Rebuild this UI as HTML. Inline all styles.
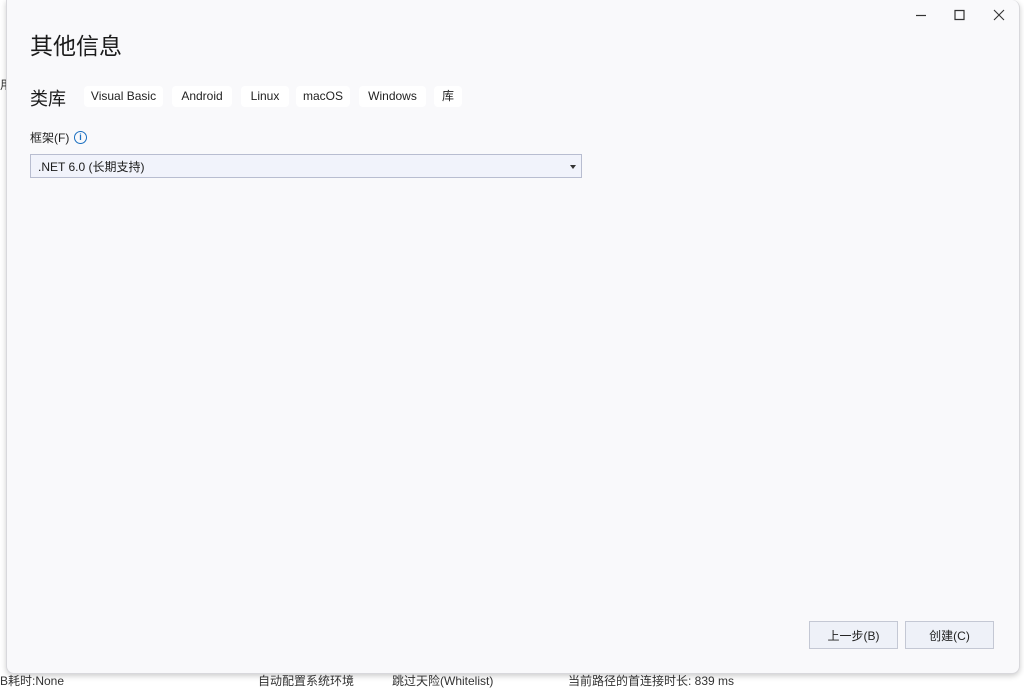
<!DOCTYPE html>
<html><head><meta charset="utf-8"><style>
body{margin:0;width:1024px;height:680px;background:#fff;position:relative;overflow:hidden;font-family:"Liberation Sans","Noto Sans CJK SC",sans-serif;}
.bgt{position:absolute;font-size:12px;color:#333;}
.dlg{position:absolute;left:6px;top:0;width:1012px;height:673px;background:#f9f9fb;border:1px solid #d8d8dc;border-top:none;border-radius:0 8px 8px 8px;box-shadow:0 2px 6px rgba(0,0,0,.2);}
.title{position:absolute;left:23px;top:27px;font-size:23px;color:#1b1b1b;}
.sub{position:absolute;left:23px;top:85px;font-size:18px;color:#1b1b1b;}
.tag{position:absolute;top:86px;height:21px;line-height:21px;background:#fff;border-radius:4px;font-size:12px;color:#222;text-align:center;}
.lab{position:absolute;left:23px;top:129px;font-size:12px;color:#222;}
.info{position:absolute;left:67px;top:131px;width:11px;height:11px;border:1.5px solid #1a6fc0;border-radius:50%;color:#1a6fc0;font-size:9px;line-height:11px;text-align:center;font-weight:bold;}
.sel{position:absolute;left:23px;top:154px;height:24px;border:1px solid #b8bdd0;background:#f1f3fb;font-size:12px;line-height:24px;padding-left:7px;box-sizing:border-box;width:552px;color:#1b1b1b;}
.sel:after{content:"";position:absolute;right:5px;top:10px;border:3px solid transparent;border-top:4px solid #333;}
.btn{position:absolute;top:621px;height:28px;border:1px solid #c4c8d4;background:#eef1f8;font-size:12px;line-height:28px;text-align:center;color:#222;box-sizing:border-box;}
</style></head><body>
<div class="bgt" style="left:0;top:76px">用</div>
<div class="bgt" style="left:0;top:672px">B耗时:None</div>
<div class="bgt" style="left:258px;top:672px">自动配置系统环境</div>
<div class="bgt" style="left:392px;top:672px">跳过天险(Whitelist)</div>
<div class="bgt" style="left:568px;top:672px">当前路径的首连接时长: 839 ms</div>
<div class="dlg">
<svg style="position:absolute;left:907px;top:9px" width="100" height="14"><path d="M2 6.5h10" stroke="#333" stroke-width="1.2"/><path d="M41 1.5h9v9h-9z" fill="none" stroke="#333" stroke-width="1.2"/><path d="M80 1l10 10M90 1l-10 10" stroke="#333" stroke-width="1.1"/></svg>
<div class="title">其他信息</div>
<div class="sub">类库</div>
<div class="tag" style="left:77px;width:79px">Visual Basic</div>
<div class="tag" style="left:165px;width:60px">Android</div>
<div class="tag" style="left:234px;width:48px">Linux</div>
<div class="tag" style="left:289px;width:54px">macOS</div>
<div class="tag" style="left:352px;width:67px">Windows</div>
<div class="tag" style="left:427px;width:28px">库</div>
<div class="lab">框架(F)</div>
<div class="info">i</div>
<div class="sel">.NET 6.0 (长期支持)</div>
<div class="btn" style="left:802px;width:89px">上一步(B)</div>
<div class="btn" style="left:898px;width:89px">创建(C)</div>
</div>
</body></html>
